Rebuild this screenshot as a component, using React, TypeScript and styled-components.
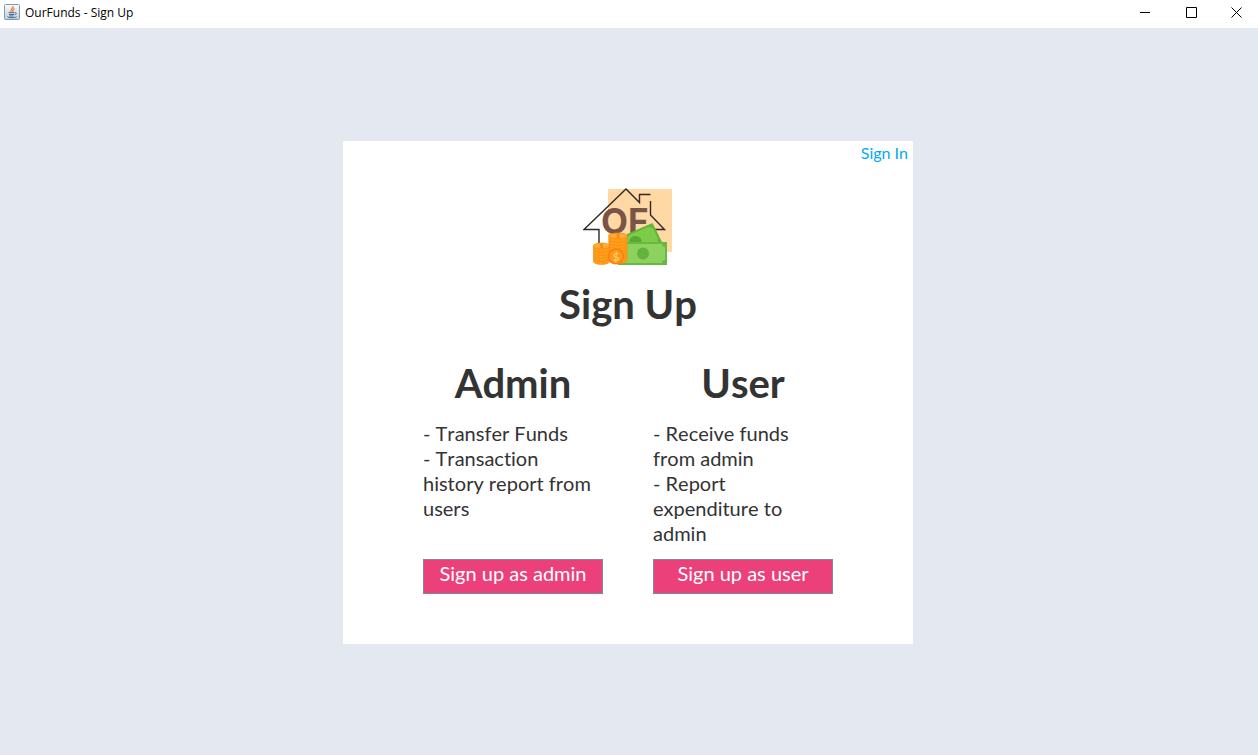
import React from "react";
import styled, { createGlobalStyle } from "styled-components";

const GlobalStyle = createGlobalStyle`
  * { box-sizing: border-box; }
  body {
    margin: 0;
    background: #e4e8f1;
    font-family: Lato, sans-serif;
    font-kerning: none;
    font-variant-ligatures: none;
    color: #333;
  }
`;

const Window = styled.div`
  min-height: 100vh;
  display: flex;
  flex-direction: column;
`;

const TitleBar = styled.header`
  height: 28px;
  padding: 0 0 4px 4px;
  display: flex;
  align-items: center;
  background: #fff;
`;

const WindowTitle = styled.span`
  flex: 1;
  margin-left: 5px;
  padding-top: 2px;
  font-family: "Open Sans", sans-serif;
  font-size: 12px;
  line-height: 16px;
  color: #000;
`;

const WindowButton = styled.button`
  width: 46px;
  height: 24px;
  padding: 0;
  border: 0;
  background: none;
  display: flex;
  align-items: center;
  justify-content: center;

  &:last-child {
    width: 44px;
  }
`;

const Content = styled.main`
  flex: 1;
  display: flex;
  align-items: center;
  justify-content: center;
  padding: 2px 2px 0 0;
`;

const Card = styled.section`
  width: 100%;
  max-width: 570px;
  padding: 2px 5px 50px;
  display: flex;
  flex-direction: column;
  align-items: center;
  background: #fff;
`;

const SignInLink = styled.a`
  align-self: flex-end;
  font-size: 16px;
  line-height: 20px;
  color: #03a9f4;
  text-decoration: none;
`;

const LogoImage = styled.svg`
  width: 90px;
  height: 78px;
  margin-top: 25px;
`;

const PageTitle = styled.h1`
  margin: 13px 0 29px;
  font-size: 40px;
  line-height: 50px;
  font-weight: 700;
`;

const Roles = styled.div`
  display: flex;
  gap: 50px;
`;

const Role = styled.section`
  width: 180px;
  display: flex;
  flex-direction: column;
`;

const RoleTitle = styled.h2`
  margin: 0 0 13px;
  font-size: 40px;
  line-height: 50px;
  font-weight: 700;
  text-align: center;
`;

const Features = styled.p`
  flex: 1;
  margin: 0 0 13px;
  font-size: 20px;
  line-height: 25px;
  white-space: pre-line;
`;

const SignUpButton = styled.button`
  height: 35px;
  padding: 0 0 6px;
  border: 1px solid #7a8a99;
  background: #ec407a;
  color: #fff;
  font-family: Lato, sans-serif;
  font-size: 20px;
  line-height: 25px;
`;

const JavaIcon = () => (
  <svg width="16" height="16" viewBox="0 0 16 16" fill="none" aria-hidden="true">
    <defs>
      <linearGradient id="tile" x1="0" y1="0" x2="0" y2="1">
        <stop offset="0" stopColor="#fafcfd" />
        <stop offset="1" stopColor="#bccddd" />
      </linearGradient>
    </defs>
    <rect x="0.5" y="0.5" width="15" height="15" rx="1" fill="url(#tile)" stroke="#8499ac" />
    <path d="M9 2C10 4 6 5 7 8M10.500 4.500C8.500 5.500 8.500 6.500 9 8" stroke="#ee7d2c" strokeWidth="1.300" />
    <path d="M4.500 8.700H10.500M5 10.500H10M11 8.700C13 8.300 12.500 10.200 10.800 10.800M5.500 12H9.500M3.500 12.500C4 14 11 14 12.500 12.800" stroke="#42698e" />
  </svg>
);

const stackLayers = (x: number, width: number, top: number, count: number) =>
  Array.from({ length: count }, (_, i) => {
    const y = top + (count - 1 - i) * 3;
    return (
      <g key={y}>
        <path
          d={`M${x} ${y}v3.500c0 4 ${width} 4 ${width} 0V${y}Z`}
          fill="#ff9b17"
          stroke="#f98a12"
          strokeWidth="0.600"
        />
        <path d={`M${x + 3} ${y + 3}v2M${x + 7} ${y + 4}v2M${x + width - 4} ${y + 3}v2`} stroke="#ffab30" strokeWidth="0.700" />
      </g>
    );
  });

const Logo = () => (
  <LogoImage viewBox="0 0 90 78" role="img" aria-label="OurFunds">
    <rect x="25" y="1" width="64" height="63" fill="#ffd8a3" />
    <g fill="none" stroke="#2f2a28" strokeWidth="1.400">
      <path d="M16 56V41.500H1L43 1L56.500 14.500V6.500H67.500" />
      <path d="M67.500 13V27L81.500 41.500H72" />
    </g>
    <text x="18" y="46" fontFamily="Inter, sans-serif" fontSize="35" fontWeight="700" fill="#795548">
      OF
    </text>
    <path d="M44 46L69.500 35L79.500 55V60H44Z" fill="#62b536" />
    <path d="M44 50L46 47L66 38.500C67 40 69 40 70 40L75 51C74 53 75 56 75 56H44Z" fill="#7ccb49" />
    <ellipse cx="52.500" cy="53" rx="6" ry="5" fill="#58a932" />
    <rect x="35" y="54" width="49" height="23" fill="#69b940" />
    <path d="M38 56H79C79 58 80 59 82 59V72C80 72 79 73 79 75H38Z" fill="#8dd25e" />
    <circle cx="60" cy="65.500" r="6" fill="#64b33c" />
    {stackLayers(26, 18, 48, 8)}
    <ellipse cx="35" cy="48" rx="9.300" ry="3" fill="#ffac32" stroke="#f68a13" strokeWidth="0.800" />
    {stackLayers(10.500, 16, 58, 5)}
    <ellipse cx="18.500" cy="58" rx="8.300" ry="3" fill="#ffac32" stroke="#f68a13" strokeWidth="0.800" />
    <circle cx="33" cy="68.500" r="8" fill="#f77f10" />
    <circle cx="33" cy="68.500" r="6" fill="#ff9519" stroke="#ffab30" strokeWidth="0.700" />
    <g fontFamily="Lato, sans-serif" fontWeight="700" textAnchor="middle">
      <text x="35" y="50" fontSize="6" fill="#ef7610">$</text>
      <text x="18.500" y="60" fontSize="6" fill="#ef7610">$</text>
      <text x="33" y="73" fontSize="12" fill="#ffd05c">$</text>
    </g>
  </LogoImage>
);

const roles = [
  {
    name: "Admin",
    features: "- Transfer Funds\n- Transaction\nhistory report from\nusers",
    action: "Sign up as admin",
  },
  {
    name: "User",
    features: "- Receive funds\nfrom admin\n- Report\nexpenditure to\nadmin",
    action: "Sign up as user",
  },
];

export default function App() {
  return (
    <Window>
      <GlobalStyle />
      <TitleBar>
        <JavaIcon />
        <WindowTitle>OurFunds - Sign Up</WindowTitle>
        <WindowButton aria-label="Minimize">
          <svg width="11" height="11" stroke="#000"><path d="M0 5.500H10" /></svg>
        </WindowButton>
        <WindowButton aria-label="Maximize">
          <svg width="11" height="11" stroke="#000" fill="none"><path d="M0.500 0.500H10.500V10.500H0.500Z" /></svg>
        </WindowButton>
        <WindowButton aria-label="Close">
          <svg width="11" height="11" stroke="#000"><path d="M0.500 0.500L10.500 10.500M10.500 0.500L0.500 10.500" /></svg>
        </WindowButton>
      </TitleBar>
      <Content>
        <Card>
          <SignInLink href="#sign-in">Sign In</SignInLink>
          <Logo />
          <PageTitle>Sign Up</PageTitle>
          <Roles>
            {roles.map((role) => (
              <Role key={role.name}>
                <RoleTitle>{role.name}</RoleTitle>
                <Features>{role.features}</Features>
                <SignUpButton>{role.action}</SignUpButton>
              </Role>
            ))}
          </Roles>
        </Card>
      </Content>
    </Window>
  );
}
